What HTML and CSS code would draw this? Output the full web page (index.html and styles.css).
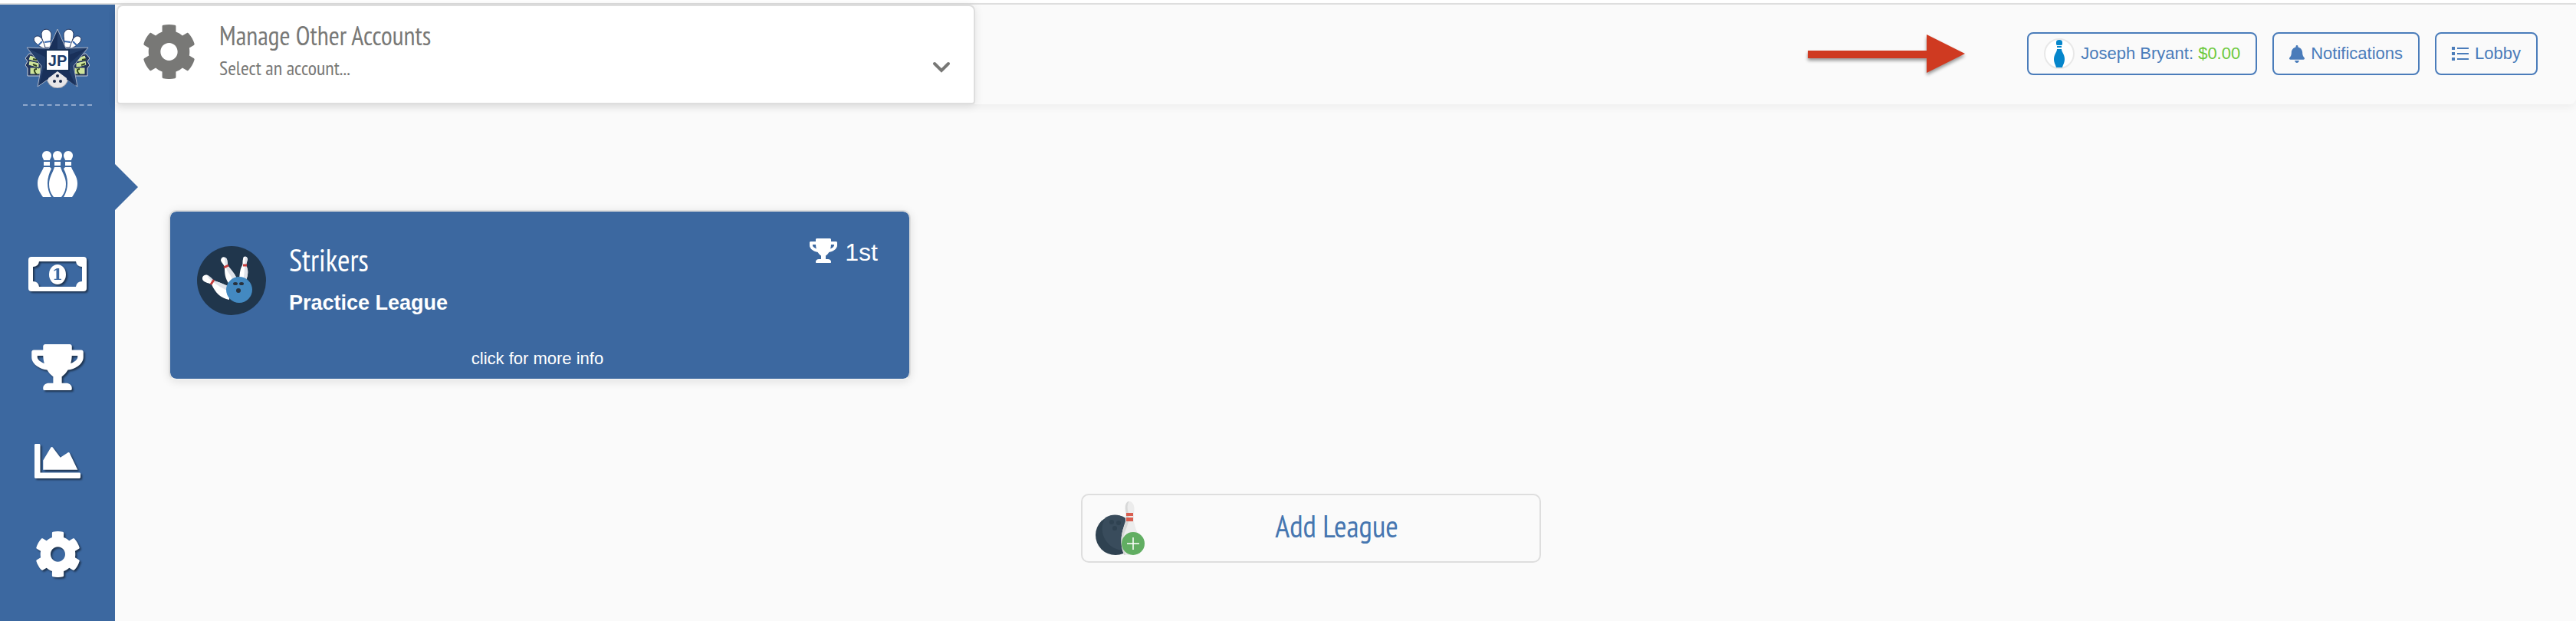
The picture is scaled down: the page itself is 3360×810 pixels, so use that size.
FILE: index.html
```html
<!DOCTYPE html>
<html lang="en">
	<head>
		<meta charset="UTF-8">
		<title>My Leagues</title>
		<link rel="stylesheet" href="styles.css">
	</head>
	<body>
		<!-- shared icon shapes -->
		<svg class="sprite" aria-hidden="true">
			<symbol id="cog" viewBox="16 8 480 496" preserveAspectRatio="none">
				<path d="M487.4 315.7l-42.6-24.6c4.3-23.2 4.3-47 0-70.2l42.6-24.6c4.9-2.8 7.1-8.6 5.5-14-11.1-35.6-30-67.8-54.7-94.6-3.8-4.1-10-5.1-14.8-2.3L380.8 110c-17.9-15.4-38.5-27.3-60.8-35.1V25.8c0-5.6-3.9-10.5-9.4-11.7-36.7-8.2-74.3-7.8-109.2 0-5.5 1.2-9.4 6.1-9.4 11.7V75c-22.2 7.9-42.8 19.8-60.8 35.1L88.7 85.5c-4.9-2.8-11-1.9-14.8 2.3-24.7 26.7-43.6 58.9-54.7 94.6-1.7 5.4.6 11.2 5.5 14L67.3 221c-4.3 23.2-4.3 47 0 70.2l-42.6 24.6c-4.9 2.8-7.1 8.6-5.5 14 11.1 35.6 30 67.8 54.7 94.6 3.8 4.1 10 5.1 14.8 2.3l42.6-24.6c17.9 15.4 38.5 27.3 60.8 35.1v49.2c0 5.6 3.9 10.5 9.4 11.7 36.7 8.2 74.3 7.8 109.2 0 5.5-1.2 9.4-6.1 9.4-11.7v-49.2c22.2-7.9 42.8-19.8 60.8-35.1l42.6 24.6c4.9 2.8 11 1.9 14.8-2.3 24.7-26.7 43.6-58.9 54.7-94.6 1.5-5.5-.7-11.3-5.6-14.1zM256 336c-44.1 0-80-35.9-80-80s35.9-80 80-80 80 35.9 80 80-35.9 80-80 80z"/>
			</symbol>
			<symbol id="trophy" viewBox="0 0 576 512">
				<path d="M552 64H448V24c0-13.3-10.7-24-24-24H152c-13.3 0-24 10.7-24 24v40H24C10.7 64 0 74.7 0 88v56c0 35.7 22.5 72.4 61.9 100.7 31.5 22.7 69.8 37.1 110 41.7C203.3 338.5 240 360 240 360v72h-48c-35.3 0-64 20.7-64 56v12c0 6.6 5.4 12 12 12h296c6.6 0 12-5.4 12-12v-12c0-35.3-28.7-56-64-56h-48v-72s36.7-21.5 68.1-73.6c40.3-4.6 78.6-19 110-41.7 39.3-28.3 61.9-65 61.9-100.7V88c0-13.3-10.7-24-24-24zM99.3 192.8C74.9 175.2 64 155.6 64 144v-16h64.2c1 32.6 5.8 61.2 12.8 86.2-15.1-5.2-29.2-12.4-41.7-21.4zM512 144c0 16.1-17.7 36.1-35.3 48.8-12.5 9-26.7 16.2-41.8 21.4 7-25 11.8-53.6 12.8-86.2H512v16z"/>
			</symbol>
		</svg>

		<div class="layout">
			<nav class="sidebar">
				<a href="#" class="logo" aria-label="Home">
					<svg width="84" height="78" viewBox="0 0 84 78">
						<g stroke="#c9ced8" stroke-width="1">
							<!-- money -->
							<g fill="#22345c">
								<path d="M5 33l16 3 3 26H3V52l-3-4 3-5-3-4z"/>
								<path d="M79 33l-16 3-3 26h21V52l3-4-3-5 3-4z"/>
							</g>
							<g fill="#cfe49a" stroke="#22345c">
								<path d="M6 35l10 3v6L4 41zM5 42l13 3v7L4 48zM6 51h14v9H6z"/>
								<path d="M78 35l-10 3v6l12-3zM79 42l-13 3v7l14-4zM78 51H64v9h14z"/>
							</g>
							<!-- pins -->
							<g fill="#fff" stroke="#22345c">
								<path d="M25 26c-5-1-10-5-13-9-3-5 3-9 7-6 4 3 5 9 12 14z"/>
								<path d="M26 25c-1-6-5-10-5-17 0-9 12-9 13 0 0 6-2 10 0 17z"/>
								<path d="M59 26c5-1 10-5 13-9 3-5-3-9-7-6-4 3-5 9-12 14z"/>
								<path d="M58 25c1-6 5-10 5-17 0-9-12-9-13 0 0 6 2 10 0 17z"/>
							</g>
						</g>
						<path d="M17 22l5-5M25 18l8-1M67 22l-5-5M59 18l-8-1" stroke="#3767ae" stroke-width="2"/>
						<!-- bowling ball -->
						<circle cx="42" cy="64" r="14" fill="#e5e3e6" stroke="#9298a5"/>
						<!-- star -->
						<path d="M42 1l11 25 29-1-19 24 5 27-26-18-26 18 5-27L2 25l29 1z" fill="#243f6b" stroke="#a9b2c5"/>
						<path d="M42 3v24H31zM4 26l27 2v12zM80 26L54 49l12 26-24-17V40zM42 57L18 74l6-22z" fill="#19305a"/>
						<path d="M42 56l12 9c0 15-24 15-24 0z" fill="#e7e6e8"/>
						<path d="M27 28h30v27H27z" fill="#fff" stroke="#173055" stroke-width="2"/>
						<text class="logo-text" x="42" y="49" text-anchor="middle">JP</text>
						<g fill="#172848"><circle cx="42" cy="62" r="2"/><circle cx="38" cy="69" r="2"/><circle cx="46" cy="69" r="2"/></g>
						<path d="M15 53q-4 0-3 3t3 4M71 53q-4 0-3 3t3 4M10 47l5 2M73 48l5-2M10 40l5 1M74 41l5-1" fill="none" stroke="#31451f" stroke-width="2"/>
					</svg>
				</a>
				<svg class="divider" width="90" height="2" viewBox="0 0 90 2"><path d="M0 1h90" stroke="#8fa8cc" stroke-width="2" stroke-dasharray="6 4.5"/></svg>
				<a href="#" class="nav-item active" aria-label="Leagues">
					<svg width="52" height="60" viewBox="0 0 52 60" fill="#fff">
						<path d="M12 0c4 0 6 3 6 6s-2 4-2 6H8c0-2-2-3-2-6s2-6 6-6zM26 0c4 0 6 3 6 6s-2 4-2 6h-8c0-2-2-3-2-6s2-6 6-6zM40 0c4 0 6 3 6 6s-2 4-2 6h-8c0-2-2-3-2-6s2-6 6-6zM8 14h8v5H8zM22 14h8v5h-8zM36 14h8v5h-8z"/>
						<path d="M8 21h8l2 2c-3 6-5 12-5 19s2 13 5 18H7C3 54 0 50 0 42c0-9 6-15 8-21zM44 21h-8l-2 2c3 6 5 12 5 19s-2 13-5 18h11c4-6 7-10 7-18 0-9-6-15-8-21z"/>
						<path d="M22 21h8c2 7 7 13 7 22 0 7-2 12-6 17H21c-4-5-6-10-6-17 0-9 5-15 7-22z"/>
					</svg>
				</a>
				<a href="#" class="nav-item shadow" aria-label="Payments">
					<svg width="76" height="45" viewBox="0 0 76 45" fill="#fff">
						<path fill-rule="evenodd" d="M4 0h68q4 0 4 4v37q0 4-4 4H4q-4 0-4-4V4q0-4 4-4zM14 6q-1 7-8 7v19q7 0 8 7h48q1-7 8-7V13q-7 0-8-7z"/>
						<ellipse cx="38" cy="23" rx="11" ry="13"/>
						<text class="bill" x="38" y="30" text-anchor="middle">1</text>
					</svg>
				</a>
				<a href="#" class="nav-item shadow" aria-label="Standings">
					<svg width="68" height="60" fill="#fff"><use href="#trophy"/></svg>
				</a>
				<a href="#" class="nav-item shadow" aria-label="Statistics">
					<svg width="60" height="45" viewBox="0 64 512 384" fill="#fff">
						<path d="M500 384c6.6 0 12 5.4 12 12v40c0 6.6-5.4 12-12 12H12c-6.6 0-12-5.4-12-12V76c0-6.6 5.4-12 12-12h40c6.6 0 12 5.4 12 12v308h436zM372.7 159.5L288 216l-85.3-113.7c-5.1-6.8-15.5-6.3-19.9 1L96 248v104h384l-89.9-187.8c-3.2-6.5-11.4-8.7-17.4-4.7z"/>
					</svg>
				</a>
				<a href="#" class="nav-item shadow" aria-label="Settings">
					<svg width="57" height="60" fill="#fff"><use href="#cog"/></svg>
				</a>
			</nav>

			<div class="main">
				<header class="topbar">
					<div class="accounts">
						<svg class="accounts-icon" width="67" height="71" fill="#787876"><use href="#cog"/></svg>
						<div class="accounts-body">
							<label for="account">Manage Other Accounts</label>
							<select id="account">
								<option>Select an account...</option>
							</select>
						</div>
						<svg class="chevron" width="24" height="16" viewBox="0 0 24 16"><path d="M3 3l9 9 9-9" fill="none" stroke="#787876" stroke-width="4" stroke-linecap="round"/></svg>
					</div>

					<svg class="arrow" width="206" height="54" viewBox="0 0 206 54"><path d="M0 21h155V0l50 25-50 25V31H0z" fill="#cf3a21"/></svg>

					<div class="actions">
						<button type="button" class="btn user">
							<svg width="40" height="40" viewBox="0 0 40 40">
								<circle cx="20" cy="20" r="19" fill="#fff" stroke="#e8e8e8" stroke-width="2"/>
								<path d="M16 8V5q0-3 4-3t4 3v3l-1 1h-6zM17 10h6v2h-6zM17 14h6c0 4 4 7 4 13 0 5-2 7-3 11h-8c-1-4-3-6-3-11 0-6 4-9 4-13z" fill="#0686cb"/>
							</svg>
							<span>Joseph Bryant: <span class="balance">$0.00</span></span>
						</button>
						<button type="button" class="btn">
							<svg width="20" height="23" viewBox="0 0 448 512" fill="#4a7cba"><path d="M224 512c35.32 0 63.97-28.65 63.97-64H160.03c0 35.35 28.65 64 63.97 64zm215.39-149.71c-19.32-20.76-55.47-51.99-55.47-154.29 0-77.7-54.48-139.9-127.94-155.16V32c0-17.67-14.32-32-31.98-32s-31.98 14.33-31.98 32v20.84C118.56 68.1 64.08 130.3 64.08 208c0 102.3-36.15 133.53-55.47 154.29-6 6.45-8.66 14.16-8.61 21.71.11 16.4 12.98 32 32.1 32h383.8c19.12 0 32-15.6 32.1-32 .05-7.55-2.61-15.27-8.61-21.71z"/></svg>
							<span>Notifications</span>
						</button>
						<button type="button" class="btn">
							<svg width="22" height="18" viewBox="0 0 22 18" fill="#4a7cba"><path d="M0 0h4v4H0zM0 7h4v4H0zM0 14h4v4H0zM7 1h15v2H7zM7 8h15v2H7zM7 15h15v2H7z"/></svg>
							<span>Lobby</span>
						</button>
					</div>
				</header>

				<div class="content">
					<a href="#" class="league">
						<svg class="league-icon" width="90" height="90" viewBox="0 0 90 90">
							<circle cx="45" cy="45" r="45" fill="#20364c"/>
							<g fill="#fff">
								<path d="M31 19c0-6 6-6 8-2 1 3 0 5 1 8 4 6 11 12 12 19l-10 6c-6-9-6-15-6-23-1-3-4-5-5-8z"/>
								<path d="M60 17c0-5 6-4 6 0 0 3-2 5-2 8 3 6 3 11 0 20l-9-2c1-8 1-13 4-18 1-3 0-5 1-8z"/>
								<path d="M8 45c-3-4 1-9 6-7 3 2 4 5 8 7 8 3 16 5 20 9v16c-11-2-18-9-23-20-4-2-8-2-11-5z"/>
							</g>
							<g fill="#dfe2e9">
								<path d="M36 15q4 0 4 10c4 6 11 12 12 19l-5 2c-2-8-8-12-10-20-1-4-1-7-1-11z"/>
								<path d="M63 14q4 1 1 11c3 6 3 11 0 20l-4-1c3-9 1-18 3-30z"/>
								<path d="M13 38q3 0 9 7c8 3 16 5 20 9v5c-8-3-17-9-22-13-3-2-5-4-7-8z"/>
							</g>
							<path d="M35 28l6-3M60 25h5M18 50l4-6" stroke="#c43d3d" stroke-width="3"/>
							<circle cx="55" cy="57" r="17" fill="#4389c1"/>
							<g fill="#28323d"><ellipse cx="50" cy="49" rx="3" ry="2"/><ellipse cx="58" cy="49" rx="3" ry="2"/><circle cx="54" cy="58" r="3"/></g>
						</svg>
						<div class="league-names">
							<h2>Strikers</h2>
							<p>Practice League</p>
						</div>
						<div class="rank">
							<svg width="36" height="32" fill="#fff"><use href="#trophy"/></svg>
							<span>1st</span>
						</div>
						<p class="more">click for more info</p>
					</a>

					<button type="button" class="add">
						<svg width="64" height="70" viewBox="0 0 64 70">
							<ellipse cx="26" cy="44" rx="26" ry="26" fill="#2f4251"/>
							<path d="M13 21C27 13 40 20 45 30l-5 34C18 66 0 42 13 21z" fill="#394c5c"/>
							<path d="M39 15c-2-8 0-15 5-15s8 7 6 15v11c1 9 6 14 6 24l-6 20H38c-8-14-4-30 1-44z" fill="#ececec"/>
							<path d="M44 0c-3 3-3 10-1 15v11c-2 9-7 16-7 24l3 20h-2c-6-16-4-30 3-44V15c-2-8-1-15 4-15z" fill="#d7d8d8"/>
							<path d="M40 15h9v4h-9zM40 21h9v5h-9z" fill="#d95e50"/>
							<g fill="#2f4251"><circle cx="21" cy="27" r="3"/><circle cx="30" cy="28" r="3"/><circle cx="25" cy="35" r="3"/></g>
							<circle cx="49" cy="55" r="15" fill="#61ae62"/>
							<path d="M49 47v16M41 55h16" stroke="#fff" stroke-width="1.5"/>
						</svg>
						<span>Add League</span>
					</button>
				</div>
			</div>
		</div>
	</body>
</html>
```
FILE: styles.css
```css
* {
	box-sizing: border-box;
}

body {
	margin: 0;
	padding-top: 4px;
	background: #fff;
	font-family: Helvetica, "Liberation Sans", Arial, sans-serif;
	font-size: 22px;
}

h2, p {
	margin: 0;
}

svg {
	display: block;
	flex: none;
}

.sprite {
	position: absolute;
	width: 0;
	height: 0;
}

.layout {
	display: flex;
	min-height: calc(100vh - 4px);
	border-top: 2px solid #e0e0e0;
	background: #fafafa;
}

/* sidebar */
.sidebar {
	flex: none;
	display: flex;
	flex-direction: column;
	align-items: center;
	width: 150px;
	padding-top: 31px;
	background: #3c68a0;
}

.logo-text {
	fill: #1c3a67;
	font: bold 20px "Liberation Sans", Arial, sans-serif;
}

.divider {
	margin: 21px 0 20px;
}

.nav-item {
	display: flex;
	align-items: center;
	justify-content: center;
	width: 100%;
	height: 122px;
}

.nav-item.active {
	position: relative;
	height: 138px;
}

.active::after {
	content: "";
	position: absolute;
	left: 100%;
	top: 56px;
	border: 30px solid transparent;
	border-right-width: 0;
	border-left-color: #3c68a0;
}

.shadow svg {
	filter: drop-shadow(2px 2px 1px rgba(0, 0, 0, .5));
}

.bill {
	fill: #3c68a0;
	font: bold 20px "DejaVu Serif", serif;
}

/* top bar */
.main {
	flex: 1;
	min-width: 0;
}

.topbar {
	display: flex;
	height: 130px;
	padding: 0 50px 0 2px;
	border-radius: 0 0 8px 0;
	box-shadow: 0 4px 12px rgba(0, 0, 0, .05);
}

.accounts {
	position: relative;
	display: flex;
	gap: 32px;
	flex: 0 1 1120px;
	padding: 0 20px 0 33px;
	border: 2px solid #dedede;
	border-radius: 8px 8px 4px 4px;
	background: #fff;
	box-shadow: 0 2px 12px rgba(0, 0, 0, .1);
}

.accounts-icon {
	margin-top: 24px;
}

.accounts-body {
	flex: 1;
	display: flex;
	flex-direction: column;
	padding-top: 16px;
	color: #787876;
	font-family: "PT Sans Narrow", "Liberation Sans Narrow", "Open Sans", sans-serif;
}

.accounts label {
	font-size: 34px;
	line-height: 44px;
}

.accounts select {
	appearance: none;
	width: 100%;
	height: 40px;
	padding: 0;
	border: 0;
	background: none;
	color: inherit;
	font-family: inherit;
	font-size: 26px;
}

.chevron {
	position: absolute;
	right: 30px;
	top: 72px;
	pointer-events: none;
}

.arrow {
	margin: 39px 80px 0 auto;
	filter: drop-shadow(0 3px 2px rgba(0, 0, 0, .4));
}

.actions {
	display: flex;
	gap: 20px;
	padding-top: 36px;
}

.btn {
	display: flex;
	align-items: center;
	gap: 8px;
	height: 56px;
	padding: 0 20px;
	border: 2px solid #4a7cba;
	border-radius: 8px;
	background: none;
	color: #4a7cba;
	font-family: inherit;
	font-size: 22px;
	white-space: nowrap;
}

.balance {
	color: #6cc93c;
}

/* content */
.content {
	padding: 138px 160px 0 70px;
}

.league {
	display: grid;
	grid-template-columns: 90px 1fr auto;
	column-gap: 30px;
	width: 968px;
	max-width: 100%;
	height: 222px;
	padding: 35px 41px 13px 35px;
	border: 2px solid #dedede;
	border-bottom-color: #f0f0f0;
	border-radius: 10px;
	background: #3c68a0;
	background-clip: padding-box;
	box-shadow: 0 2px 12px rgba(0, 0, 0, .1);
	color: #fff;
	text-decoration: none;
}

.league-icon {
	margin-top: 10px;
}

.league h2 {
	font: 40px/56px "PT Sans Narrow", "Liberation Sans Narrow", "Open Sans", sans-serif;
}

.league-names p {
	font-size: 27px;
	font-weight: bold;
	line-height: 56px;
}

.rank {
	display: flex;
	gap: 10px;
	font-size: 32px;
	line-height: 36px;
}

.more {
	grid-column: 1 / -1;
	align-self: end;
	text-align: center;
	line-height: 26px;
}

.add {
	display: flex;
	align-items: center;
	width: 600px;
	max-width: 100%;
	height: 90px;
	margin: 148px auto 0;
	padding: 0 0 0 17px;
	border: 2px solid #dedede;
	border-radius: 10px;
	background: none;
	color: #4676b0;
	font: 40px "PT Sans Narrow", "Liberation Sans Narrow", "Open Sans", sans-serif;
}

.add span {
	flex: 1;
	padding: 0 14px 6px 0;
	text-align: center;
}
```
